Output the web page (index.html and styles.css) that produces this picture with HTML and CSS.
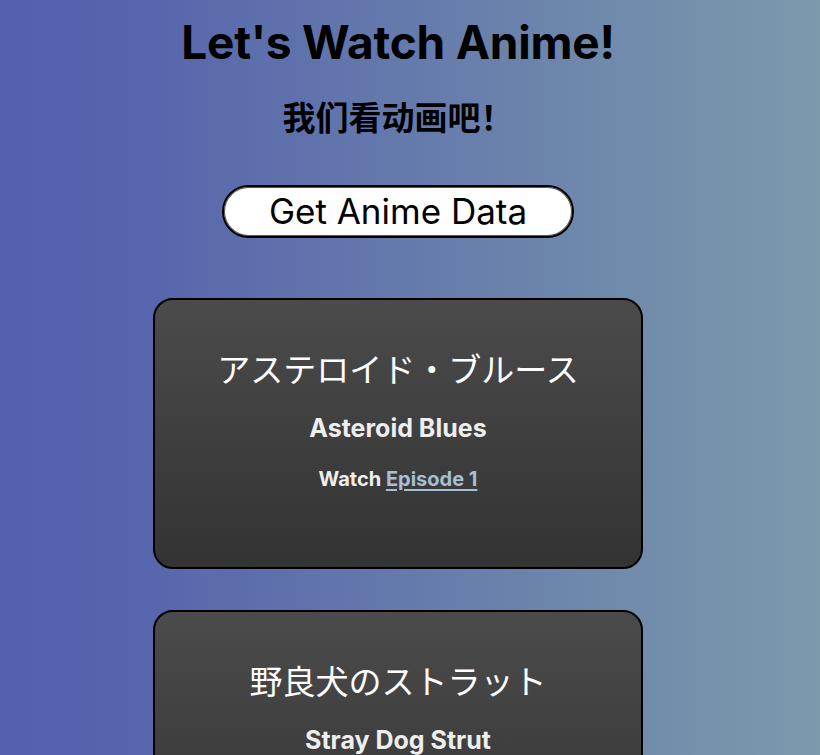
FILE: index.html
```html
<!DOCTYPE html>
<html lang="en">
<head>
<meta charset="utf-8">
<title>Let's Watch Anime!</title>
<link rel="stylesheet" href="styles.css">
</head>
<body>
<main class="page">
  <h1 class="title">Let's Watch Anime!</h1>
  <h2 class="subtitle" lang="zh-CN">我们看动画吧！</h2>
  <button class="fetch-btn" type="button">Get Anime Data</button>
  <section class="list">
    <article class="card">
      <h3 class="card-jp" lang="ja">アステロイド・ブルース</h3>
      <h4 class="card-en">Asteroid Blues</h4>
      <p class="card-watch">Watch <a href="#" class="card-link">Episode 1</a></p>
    </article>
    <article class="card">
      <h3 class="card-jp" lang="ja">野良犬のストラット</h3>
      <h4 class="card-en">Stray Dog Strut</h4>
      <p class="card-watch">Watch <a href="#" class="card-link">Episode 2</a></p>
    </article>
  </section>
</main>
</body>
</html>
```

FILE: styles.css
```css
html, body {
  margin: 0;
  padding: 0;
}

body {
  min-height: 100vh;
  background: linear-gradient(to right, #5262ae 0%, #5664ad 15%, #7b9aab 100%);
  background-attachment: fixed;
  font-family: Inter, "Noto Sans", "Noto Sans CJK JP", sans-serif;
  color: #000;
}

.page {
  width: 796px;
  display: flex;
  flex-direction: column;
  align-items: center;
}

.title {
  margin: 14px 0 0;
  font-size: 46px;
  line-height: 56px;
  font-weight: 700;
  letter-spacing: -0.2px;
}

.subtitle {
  margin: 28px 0 0;
  font-family: Inter, "Noto Sans CJK SC", sans-serif;
  font-size: 33px;
  line-height: 40px;
  font-weight: 700;
}

.fetch-btn {
  margin-top: 47px;
  width: 352px;
  height: 53px;
  background: #fff;
  border: 2px solid #000;
  border-radius: 27px;
  box-shadow: inset 0 0 0 1px #555;
  font-family: Inter, sans-serif;
  font-size: 35px;
  line-height: 1;
  color: #000;
  padding: 0;
}

.list {
  margin-top: 60px;
  display: flex;
  flex-direction: column;
  gap: 41px;
}

.card {
  box-sizing: border-box;
  width: 490px;
  height: 271px;
  border: 2px solid #000;
  border-radius: 20px;
  background: linear-gradient(to bottom, #4c4b4c, #333333);
  color: #f2f2f2;
  display: flex;
  flex-direction: column;
  align-items: center;
  padding-top: 48px;
}

.card-jp {
  margin: 0;
  font-family: "Noto Sans CJK JP", sans-serif;
  font-size: 33px;
  line-height: 40px;
  font-weight: 400;
  color: #fff;
}

.card-en {
  margin: 25px 0 0;
  font-size: 25px;
  line-height: 30px;
  font-weight: 700;
  color: #eee;
}

.card-watch {
  margin: 23px 0 0;
  font-size: 20px;
  line-height: 26px;
  font-weight: 700;
  color: #f0f0f0;
}

.card-link {
  color: #a6bfd2;
  text-decoration: underline;
  text-underline-offset: 3px;
}
```
